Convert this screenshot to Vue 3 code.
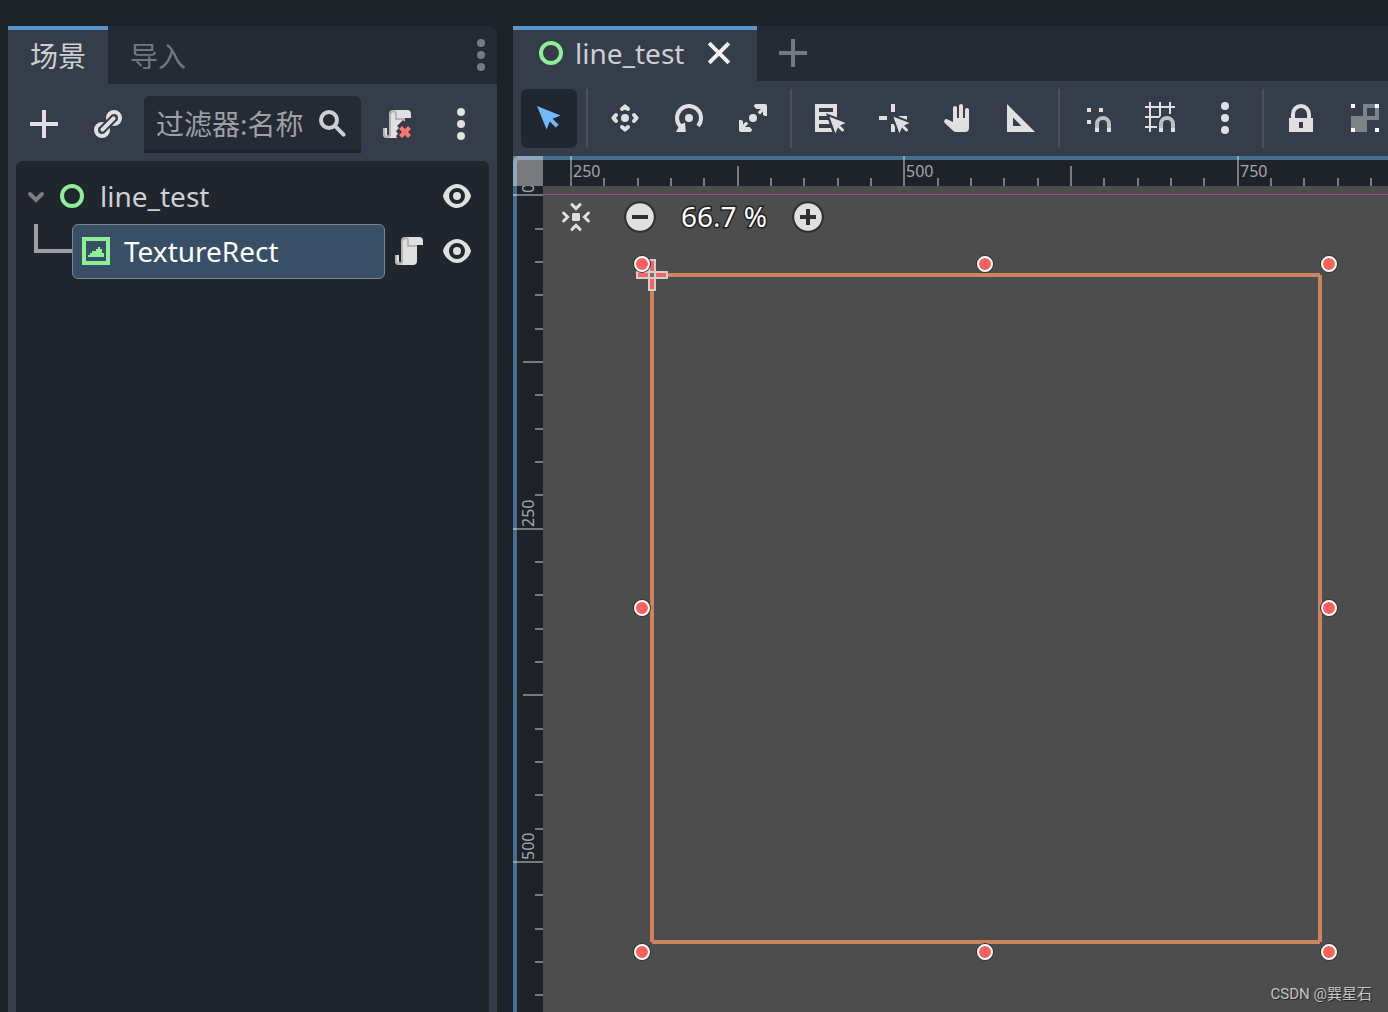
<script setup>
import { computed, h, onBeforeUnmount, onMounted, ref } from 'vue'

const filter = ref('')
const tool = ref('select')

const arrow = 'M2 2l4.8 11.8 1.6-4 3 3 1.4-1.4-3-3 4-1.6z'
const cursor = '<path class="cut" d="M8.2 7.4l3 8.2 1.3-2.8 2.2 2.2 1-1-2.2-2.2 2.8-1.3z"/><path d="M8.2 7.4l3 8.2 1.3-2.8 2.2 2.2 1-1-2.2-2.2 2.8-1.3z"/>'
const magnet = '<path fill="#bcbec1" d="M7 13v-2a4 4 0 0 1 8 0v2h-2v-2a2 2 0 0 0-4 0v2z"/><path d="M7 13h2v2H7zM13 13h2v2h-2z"/>'
const scroll = '<path d="M6 1v1a1 1 0 0 0-1 1v10a1 1 0 0 1-2 0v-3H1v3a2 2 0 0 0 2 2h7a2 2 0 0 0 2-2V5h3V3a2 2 0 0 0-2-2z"/><path fill="#b4b4b4" d="M6 1a2 2 0 0 0-2 2v10a1 1 0 0 1-1.300.9L2 13v-3H1v3a2 2 0 0 0 4 0V3a1 1 0 0 1 2 0v3h5V5H8V3a2 2 0 0 0-2-2z"/>'

const glyphs = {
  add: '<path d="M7 1v6H1v2h6v6h2V9h6V7H9V1z"/>',
  link: '<g class="line"><circle cx="11" cy="5" r="3"/><circle cx="5" cy="11" r="3"/><path class="cutline" d="M5.4 10.6l5.2-5.2"/><path stroke-linecap="round" d="M5.2 10.8l5.6-5.6"/></g>',
  search: '<g class="line"><circle cx="6.5" cy="6" r="4"/><path stroke-linecap="round" d="M9.6 9.1l4.2 4.2"/></g>',
  kebab: '<circle cx="8" cy="2" r="2"/><circle cx="8" cy="8" r="2"/><circle cx="8" cy="14" r="2"/>',
  script: scroll,
  detach: scroll + '<path class="gap" d="M11 6l-3 3 1 1-1.500 1.500L8.500 13 7.500 14l1 2H16V5h-2.500v3z"/><path fill="#ff786b" d="M10.500 9l-1.500 1.500 1.500 1.500L9 13.500l1.500 1.500 1.500-1.500 1.500 1.500 1.500-1.500-1.500-1.500 1.500-1.500L13.500 9 12 10.500z"/>',
  eye: '<path fill-rule="evenodd" d="M8 2C5.443 2 2.209 3.948 1.045 7.705a1 1 0 0 0 .006.608C2.163 11.830 5.499 14 8 14s5.836-2.169 6.950-5.688a1 1 0 0 0 .005-.592C13.840 3.967 10.557 2 8 2zm0 2a4 4 0 0 1 0 8 4 4 0 0 1 0-8zm0 2a2 2 0 1 0 0 4 2 2 0 0 0 0-4z"/>',
  ring: '<circle class="line" cx="8" cy="8" r="5"/>',
  texture: '<path fill-rule="evenodd" d="M1 1h14v14H1zM3 3v10h10V3z"/><path d="M4 11v-1h1V9h1V8h2V7h1V6h1v1h1v2h1v2z"/>',
  close: '<path class="line" stroke-linecap="square" d="M3.800 3.800l8.400 8.400M12.200 3.800l-8.400 8.400"/>',
  select: `<path d="${arrow}"/>`,
  move: '<circle cx="8" cy="8" r="2"/><g class="line" stroke-linecap="round" stroke-linejoin="round"><path d="M6.500 3.500L8 2.200l1.500 1.300M6.500 12.500L8 13.800l1.500-1.300M3.500 6.500L2.200 8l1.300 1.500M12.500 6.500L13.800 8l-1.300 1.500"/></g>',
  rotate: '<circle cx="8" cy="8" r="2"/><path class="line" d="M4 12.500A6 6 0 1 1 12.500 12"/><path d="M1.500 15h4.900L6 10.200 3.600 11.200 2.800 12.600z"/>',
  scale: '<circle cx="8" cy="8" r="2"/><path d="M9.200 1H14a1 1 0 0 1 1 1v5h-1l-1-.5V4.800L11.500 6.300l-1.200-1.200L12 3.500H9.700L8.300 2zM6.800 15H2a1 1 0 0 1-1-1V9h1l1 .5v1.700l1.500-1.500 1.200 1.200L4 12.500h2.300L7.700 14z"/>',
  list: '<path fill-rule="evenodd" d="M1 1h11v14H1zM3 3v2h7V3zM3 7v2h9V7zM3 11v2h9v-2z"/><path d="M10 6h2v3h-2z"/><path class="gap" d="M7 7l3 9h6V9.500z"/>' + cursor,
  pivot: '<path d="M7 1h2v4H7zM1 7h4v2H1zM11 7h4v2h-4zM7 11h2v4H7z"/>' + cursor,
  pan: '<path d="M6 3a1 1 0 0 1 2 0v5h1V2a1 1 0 0 1 2 0v6h1V4a1 1 0 0 1 2 0v9a2 2 0 0 1-2 2H7.500a2 2 0 0 1-1.200-.4L2 10.600a1.100 1.100 0 0 1 1.400-1.800L6 10z"/>',
  ruler: '<path fill-rule="evenodd" d="M1 1v14h14zM4 7.800L8.200 12H4z"/>',
  snap: '<path d="M3 3h2v2H3zM9 3h2v2H9zM3 9h2v2H3z"/>' + magnet,
  grid: '<path d="M2 0h1v2h4V0h1v2h4V0h1v2h2v1h-2v3h-1V3H8v4L7 8H3v4h3v1H3v2H2v-2H0v-1h2V8H0V7h2V3H0V2h2zM3 3v4h4V3z" fill-rule="evenodd"/>' + magnet,
  lock: '<path class="line" d="M4 9V6a4 4 0 0 1 8 0v3"/><path fill-rule="evenodd" d="M2 8h12v7H2zM7 10v3h2v-3z"/>',
  group: '<path fill="#7e838a" fill-rule="evenodd" d="M7 1h8v8H9v6H1V7h6zM9 3v4h4V3z"/><path fill="#fff" d="M1 1h2v2H1zM13 1h2v2h-2zM1 13h2v2H1zM13 13h2v2h-2z"/>',
  center: '<rect x="6" y="6" width="4" height="4" rx=".6"/><path class="thin" stroke-linecap="round" d="M6 1.800l2 2 2-2M6 14.200l2-2 2 2M1.800 6l2 2-2 2M14.200 6l-2 2 2 2"/>',
  minus: '<circle class="disc" cx="8" cy="8" r="7.400"/><path fill="#303030" d="M4 7h8v2H4z"/>',
  plus: '<circle class="disc" cx="8" cy="8" r="7.400"/><path fill="#303030" d="M7 4h2v3h3v2H9v3H7V9H4V7h3z"/>',
  chevron: '<path class="line" stroke-linecap="round" d="M5 7l3 3 3-3"/>'
}

const Icon = (props) =>
  h('svg', { class: 'icon', viewBox: '0 0 16 16', 'aria-hidden': 'true', innerHTML: glyphs[props.name] })
Icon.props = ['name']

const toolGroups = [
  [['select', '选择模式']],
  [['move', '移动模式'], ['rotate', '旋转模式'], ['scale', '缩放模式']],
  [['list', '可选节点列表'], ['pivot', '更改轴心'], ['pan', '平移模式'], ['ruler', '标尺模式']],
  [['snap', '智能吸附'], ['grid', '栅格吸附'], ['kebab', '吸附选项']],
  [['lock', '锁定'], ['group', '编组']]
]

// Ruler marks: ten divisions per 250 units, one division is 100/3 px.
function marks(start, first, length, snap) {
  const count = Math.max(0, Math.ceil(((length - start) * 3) / 100))
  return Array.from({ length: count }, (_, i) => ({
    at: start + snap((i * 100) / 3),
    size: i % 10 === 0 ? 30 : i % 5 === 0 ? 20 : 8,
    label: i % 10 === 0 ? String(first + i * 25) : ''
  }))
}

const canvas = ref(null)
const extent = ref({ width: 0, height: 0 })
const across = computed(() => marks(28, 250, extent.value.width, Math.round))
const down = computed(() => marks(9, 0, extent.value.height, Math.ceil))

function measure() {
  extent.value = { width: canvas.value.clientWidth, height: canvas.value.clientHeight }
}
onMounted(() => {
  measure()
  window.addEventListener('resize', measure)
})
onBeforeUnmount(() => window.removeEventListener('resize', measure))

const handles = [
  [99, 78], [442, 78], [786, 78],
  [99, 422], [786, 422],
  [99, 766], [442, 766], [786, 766]
]
</script>

<template>
  <div class="editor">
    <aside class="dock">
      <nav class="tabs">
        <button class="tab active">场景</button>
        <button class="tab">导入</button>
        <button class="more" aria-label="面板选项"><Icon name="kebab" /></button>
      </nav>
      <div class="dock-tools">
        <button class="tool" aria-label="添加节点"><Icon name="add" /></button>
        <button class="tool" aria-label="实例化场景"><Icon name="link" /></button>
        <label class="filter">
          <input v-model="filter" type="text" placeholder="过滤器:名称" aria-label="过滤器:名称" />
          <Icon name="search" />
        </label>
        <button class="tool" aria-label="移除脚本"><Icon name="detach" /></button>
        <button class="tool" aria-label="更多选项"><Icon name="kebab" /></button>
      </div>
      <ul class="tree">
        <li class="row">
          <button class="fold" aria-label="折叠"><Icon name="chevron" /></button>
          <span class="node"><Icon name="ring" class="green" />line_test</span>
          <button class="eye" aria-label="切换可见性"><Icon name="eye" /></button>
        </li>
        <li class="row child">
          <span class="branch"></span>
          <span class="node selected"><Icon name="texture" class="green" />TextureRect</span>
          <button class="script" aria-label="打开脚本"><Icon name="script" /></button>
          <button class="eye" aria-label="切换可见性"><Icon name="eye" /></button>
        </li>
      </ul>
    </aside>

    <main class="workspace">
      <nav class="scene-tabs">
        <div class="scene-tab">
          <Icon name="ring" class="green" />
          <span>line_test</span>
          <button class="close" aria-label="关闭"><Icon name="close" /></button>
        </div>
        <button class="new-tab" aria-label="新建场景"><Icon name="add" /></button>
      </nav>

      <div class="toolbar">
        <div v-for="(group, g) in toolGroups" :key="g" class="group">
          <button
            v-for="[name, label] in group"
            :key="name"
            class="tool"
            :class="{ pressed: tool === name }"
            :aria-label="label"
            @click="tool = name"
          >
            <Icon :name="name" />
          </button>
        </div>
      </div>

      <section class="viewport">
        <svg class="ruler top">
          <g v-for="m in across" :key="m.at">
            <rect :x="m.at - 1" :y="30 - m.size" width="2" :height="m.size" />
            <text v-if="m.label" :x="m.at + 2" y="21">{{ m.label }}</text>
          </g>
        </svg>
        <svg class="ruler left">
          <g v-for="m in down" :key="m.at">
            <rect :x="30 - m.size" :y="m.at - 1" :width="m.size" height="2" />
            <text v-if="m.label" :transform="`translate(21 ${m.at - 2}) rotate(-90)`">{{ m.label }}</text>
          </g>
        </svg>
        <div class="corner"></div>
        <div ref="canvas" class="canvas">
          <svg class="scene">
            <rect class="axis" x="0" y="8" width="100%" height="1" />
            <path class="bounds" d="M109 89H777M777 89V756M777 756H109M109 756V89" />
            <g class="pivot">
              <rect x="94" y="86" width="30" height="6" />
              <rect x="106" y="74" width="6" height="30" />
              <rect class="outline" x="106" y="86" width="6" height="6" />
            </g>
            <g v-for="([x, y], i) in handles" :key="i">
              <circle :cx="x" :cy="y" r="9" fill="#333" />
              <circle :cx="x" :cy="y" r="7" fill="#ff5f5f" stroke="#fff" stroke-width="2" />
            </g>
          </svg>
          <div class="zoom">
            <button aria-label="居中视图"><Icon name="center" /></button>
            <button class="less" aria-label="缩小"><Icon name="minus" /></button>
            <button class="level">66.7 %</button>
            <button aria-label="放大"><Icon name="plus" /></button>
          </div>
          <span class="credit">CSDN @巽星石</span>
        </div>
      </section>
    </main>
  </div>
</template>

<style>
body {
  margin: 0;
  background: #1e2229;
}
</style>

<style scoped>
.editor {
  display: flex;
  gap: 16px;
  box-sizing: border-box;
  height: 100vh;
  padding: 26px 0 0 8px;
  overflow: hidden;
  background: #1e2229;
  color: #cdcfd2;
  font: 28px/38px "Noto Sans", "Noto Sans CJK SC", sans-serif;
}
button {
  display: flex;
  align-items: center;
  justify-content: center;
  flex: none;
  padding: 0;
  border: 0;
  background: none;
  color: #e0e0e0;
  font: inherit;
}
.icon {
  display: block;
  flex: none;
  width: 32px;
  height: 32px;
  fill: currentColor;
  overflow: visible;
}
.icon :deep(.line) {
  fill: none;
  stroke: currentColor;
  stroke-width: 2;
}
.icon :deep(.thin) {
  fill: none;
  stroke: currentColor;
  stroke-width: 1.5;
}
.icon :deep(.cutline) {
  stroke: #363d4a;
  stroke-width: 4;
}
.icon :deep(.cut) {
  fill: #363d4a;
  stroke: #363d4a;
  stroke-width: 2;
}
.icon :deep(.gap) {
  fill: #363d4a;
}
.icon :deep(.disc) {
  stroke: #303030;
  stroke-width: 1;
}
.green {
  color: #8eef97;
}

.dock {
  display: flex;
  flex-direction: column;
  flex: none;
  width: 489px;
  background: #363d4a;
  border-radius: 0 12px 0 0;
}
.tabs {
  display: flex;
  height: 58px;
  background: #252b34;
  border-radius: 0 12px 0 0;
}
.tab {
  padding: 2px 22px 0;
  color: #737880;
}
.tab.active {
  background: #363d4a;
  box-shadow: inset 0 4px #5b97cc;
  color: #cdcfd2;
}
.more {
  width: 32px;
  margin-left: auto;
  color: #777a7f;
}
.dock-tools {
  display: flex;
  gap: 8px;
  padding: 12px 8px 8px;
}
.tool {
  width: 56px;
  padding-bottom: 1px;
  border-radius: 6px;
}
.filter {
  display: flex;
  align-items: center;
  flex: 1;
  box-sizing: border-box;
  min-width: 0;
  height: 57px;
  padding: 3px 13px 0 12px;
  background: #252b34;
  border-bottom: 4px solid #1e2229;
  border-radius: 6px 6px 0 0;
}
.filter input {
  flex: 1;
  min-width: 0;
  height: 38px;
  padding: 0;
  border: 0;
  outline: 0;
  background: none;
  color: #cdcfd2;
  font: inherit;
}
.filter input::placeholder {
  color: #9da0a5;
  opacity: 1;
}
.tree {
  flex: 1;
  margin: 0 8px;
  padding: 8px 16px 0 0;
  list-style: none;
  background: #21262e;
  border-radius: 6px 6px 0 0;
}
.row {
  display: flex;
  align-items: stretch;
  height: 55px;
}
.row button,
.node {
  padding-bottom: 1px;
}
.fold {
  width: 32px;
  margin: 0 4px;
  color: #7b7d82;
}
.node {
  display: flex;
  align-items: center;
  gap: 12px;
  flex: 1;
}
.branch {
  width: 34px;
  height: 25px;
  margin-left: 18px;
  border: solid #9d9ea3;
  border-width: 0 0 4px 4px;
}
.selected {
  box-sizing: border-box;
  padding: 0 7px 1px;
  border: 1px solid #7f858c;
  border-radius: 6px;
  background: #384f66;
  color: #fff;
}
.script {
  margin: 0 16px 0 8px;
}

.workspace {
  display: flex;
  flex-direction: column;
  flex: 1;
  min-width: 0;
  background: #363d4a;
}
.scene-tabs {
  display: flex;
  flex: none;
  height: 55px;
  background: #252b34;
}
.scene-tab {
  display: flex;
  align-items: center;
  gap: 8px;
  padding: 0 22px 1px;
  background: #363d4a;
  box-shadow: inset 0 4px #5b97cc;
}
.close {
  margin-left: 11px;
  color: #f0f0f0;
}
.new-tab {
  margin-left: 20px;
  padding-bottom: 1px;
  color: #77797d;
}
.toolbar {
  display: flex;
  flex: none;
  gap: 8px;
  height: 59px;
  padding: 8px;
  overflow: hidden;
}
.group {
  display: flex;
  flex: none;
  gap: 8px;
}
.group + .group::before {
  content: "";
  width: 2px;
  margin: 0 1px;
  background: #4a505c;
}
.pressed {
  background: #212730;
  color: #70bafa;
}
.viewport {
  position: relative;
  display: grid;
  flex: 1;
  grid-template: 30px minmax(0, 1fr) / 30px minmax(0, 1fr);
  min-height: 0;
  background: #1e2229;
}
.viewport::before {
  content: "";
  position: absolute;
  inset: 0;
  border: solid #466d92;
  border-width: 4px 0 0 4px;
  border-radius: 6px 0 0;
}
.ruler {
  position: relative;
  width: 100%;
  height: 100%;
  overflow: hidden;
  fill: rgba(255, 255, 255, 0.4);
  font-size: 16px;
}
.ruler text {
  fill: #a3a6a9;
}
.top {
  grid-area: 1 / 2;
}
.left {
  grid-area: 2 / 1;
}
.corner {
  position: relative;
  grid-area: 1 / 1;
  background: rgba(255, 255, 255, 0.4);
}
.canvas {
  position: relative;
  grid-area: 2 / 2;
  overflow: hidden;
  background: #4d4d4d;
}
.scene {
  display: block;
  width: 100%;
  height: 100%;
}
.axis {
  fill: #a04a9b;
}
.bounds {
  fill: none;
  stroke: #cb845d;
  stroke-width: 4;
}
.pivot {
  fill: #ff5f5f;
  stroke: #d0d0d0;
  stroke-width: 2;
}
.outline {
  fill: #8a6a5a;
}
.zoom {
  position: absolute;
  top: 11px;
  left: 17px;
  display: flex;
  align-items: center;
}
.less {
  margin-left: 32px;
}
.level {
  width: 136px;
  padding-bottom: 2px;
  color: #fff;
  -webkit-text-stroke: 3px #222;
  paint-order: stroke fill;
}
.credit {
  position: absolute;
  right: 16px;
  bottom: 8px;
  color: #c4c4c4;
  font: 15px/20px Roboto, "Noto Sans CJK SC", sans-serif;
  text-shadow: 1px 1px 1px #222;
}
</style>
